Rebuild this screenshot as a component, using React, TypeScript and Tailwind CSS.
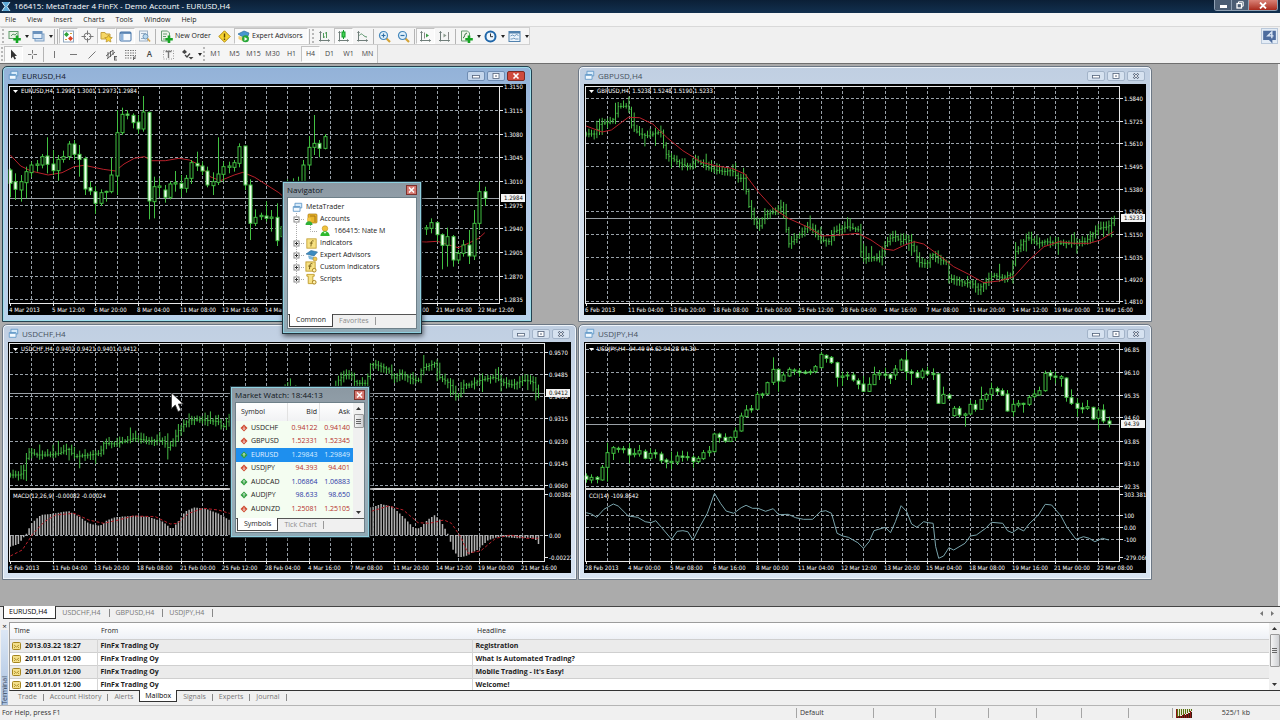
import type { ReactNode } from "react";

type Candle = [number, number, number, number, number];
type Point = [number, number];

/* ---------- chart geometry ---------- */

const GRID_STEP = 21.33;
const U = (v: number) => v / 3;

function noise(i: number, salt: number) {
  const s = Math.sin(i * 12.9898 + salt * 78.233) * 43758.5453;
  return s - Math.floor(s);
}

function linePath(points: Point[], kx: number) {
  return points.map(([x, y], i) => `${i ? "L" : "M"}${(x / kx).toFixed(1)} ${U(y).toFixed(1)}`).join("");
}

function valueAt(points: Point[], x: number) {
  for (let i = 1; i < points.length; i++) {
    const [x0, y0] = points[i - 1];
    const [x1, y1] = points[i];
    if (x <= x1) return y0 + ((y1 - y0) * (x - x0)) / (x1 - x0);
  }
  return points[points.length - 1][1];
}

function barPath(points: Point[], kx: number, x0: number) {
  let d = "";
  let prev = points[0][1];
  for (let i = 0; i < 199; i++) {
    const x = x0 + i * 2.667;
    const y = valueAt(points, x * kx);
    const up = 4 + noise(i, 1) * 16 + (noise(i, 2) > 0.9 ? 18 : 0);
    const dn = 4 + noise(i, 3) * 14 + (noise(i, 4) > 0.92 ? 18 : 0);
    const hi = Math.min(prev, y) - up;
    const lo = Math.max(prev, y) + dn;
    d += `M${x.toFixed(1)} ${U(hi).toFixed(1)}V${U(lo).toFixed(1)}M${(x - 1).toFixed(1)} ${U(prev).toFixed(1)}h1M${x.toFixed(1)} ${U(y).toFixed(1)}h1`;
    prev = y;
  }
  return d;
}

/* ---------- chart data ---------- */

const eurCandles: (Candle | null)[] = [
  [325, 330, 370, 412, 1], [340, 365, 388, 420, 1], [345, 365, 390, 425, 0], [320, 335, 368, 415, 0], [305, 315, 338, 352, 0],
  [300, 312, 316, 335, 0], [282, 290, 315, 325, 0], [232, 288, 313, 340, 1], [270, 312, 332, 345, 1], [285, 298, 332, 362, 0],
  [272, 290, 298, 308, 0], [243, 252, 290, 300, 0], [240, 252, 283, 300, 1], [255, 283, 298, 350, 1], [290, 296, 387, 405, 1],
  [365, 383, 393, 405, 1], [378, 395, 430, 462, 1], [388, 398, 430, 438, 0], [392, 394, 397, 425, 0], [293, 345, 395, 400, 0],
  [150, 218, 348, 405, 0], [143, 163, 218, 225, 0], [150, 162, 166, 178, 1], [160, 166, 188, 205, 1], [165, 186, 207, 222, 1],
  [108, 156, 207, 215, 0], [155, 157, 423, 478, 1], [350, 380, 425, 475, 0], [355, 378, 382, 410, 0], [375, 390, 412, 428, 1],
  [365, 372, 412, 418, 0], [333, 368, 372, 395, 0], [345, 370, 385, 410, 1], [345, 355, 385, 398, 0], [300, 308, 355, 372, 0],
  [275, 310, 318, 333, 1], [305, 318, 333, 345, 1], [320, 333, 375, 382, 1], [337, 365, 377, 405, 0], [232, 342, 367, 375, 0],
  [305, 320, 343, 365, 0], [305, 318, 322, 340, 0], [300, 308, 322, 335, 0], [250, 260, 310, 322, 0], [258, 258, 375, 390, 1],
  [358, 375, 490, 540, 1], [448, 472, 490, 498, 0], [458, 466, 470, 480, 0], [424, 468, 475, 485, 1], [450, 471, 475, 515, 0],
  [430, 472, 542, 558, 1], [480, 500, 530, 560, 0], [358, 400, 450, 480, 0], [355, 390, 420, 440, 0], [350, 365, 400, 420, 0],
  [300, 315, 370, 380, 0], [228, 262, 315, 330, 0], [165, 250, 262, 285, 0], [240, 250, 265, 292, 1], [222, 230, 265, 268, 0],
  null, null, null, null, null, null, null, null, null, null, null, null, null, null, null, null, null, null,
  [495, 503, 507, 525, 0], [475, 488, 505, 520, 0], [485, 488, 524, 545, 1], [520, 524, 556, 628, 1], [503, 530, 556, 620, 0],
  [525, 530, 600, 620, 1], [570, 580, 600, 610, 0], [540, 555, 580, 590, 0], [510, 555, 588, 612, 1], [450, 490, 588, 600, 0],
  [365, 395, 490, 510, 0], [380, 395, 415, 438, 1],
];

const eurAverage: Point[] = [
  [30, 285], [60, 318], [90, 333], [140, 345], [180, 338], [215, 320], [245, 316], [300, 328], [335, 333], [360, 312], [390, 295],
  [420, 290], [440, 302], [480, 302], [520, 295], [550, 300], [580, 315], [610, 350], [640, 362], [680, 345], [705, 337], [740, 352],
  [770, 372], [810, 398], [900, 480], [1100, 540], [1238, 546], [1270, 544], [1330, 563], [1360, 550], [1390, 535], [1408, 518],
];

const gbpPrice: Point[] = [
  [43, 222], [65, 222], [80, 190], [100, 188], [118, 175], [125, 140], [155, 138], [165, 205], [185, 222], [205, 228], [225, 220],
  [243, 215], [252, 280], [270, 295], [300, 315], [320, 320], [335, 300], [360, 320], [385, 330], [410, 335], [430, 330], [445, 355],
  [465, 355], [471, 425], [485, 470], [503, 500], [515, 465], [545, 455], [560, 440], [572, 470], [578, 555], [600, 535], [630, 500],
  [650, 510], [665, 540], [690, 545], [700, 515], [735, 500], [768, 510], [775, 598], [800, 592], [820, 598], [835, 560], [850, 535],
  [865, 530], [880, 545], [895, 530], [910, 560], [930, 610], [950, 610], [960, 580], [985, 600], [1000, 605], [1003, 655], [1030, 660],
  [1050, 670], [1065, 665], [1085, 690], [1100, 670], [1125, 645], [1150, 655], [1175, 640], [1180, 580], [1195, 560], [1215, 530],
  [1240, 550], [1265, 545], [1290, 550], [1320, 550], [1345, 550], [1352, 545], [1370, 545], [1390, 520], [1405, 505], [1430, 500], [1447, 480],
];

const gbpAverage: Point[] = [
  [43, 198], [85, 216], [110, 210], [155, 172], [185, 173], [220, 192], [260, 235], [300, 272], [350, 307], [390, 318], [430, 325],
  [465, 342], [500, 395], [540, 445], [580, 475], [630, 500], [670, 528], [720, 525], [765, 520], [800, 540], [835, 567], [860, 571],
  [890, 555], [915, 545], [940, 552], [980, 585], [1020, 620], [1060, 643], [1100, 668], [1140, 663], [1180, 650], [1220, 600],
  [1260, 560], [1300, 545], [1340, 550], [1380, 550], [1410, 540], [1445, 515],
];

const chfPrice: Point[] = [
  [28, 465], [55, 465], [65, 450], [75, 395], [100, 405], [130, 405], [160, 400], [185, 385], [200, 410], [240, 405], [270, 400],
  [280, 370], [310, 372], [360, 355], [400, 362], [440, 362], [455, 385], [470, 360], [485, 325], [510, 300], [550, 300], [590, 305],
  [602, 325], [620, 290], [700, 260], [775, 208], [800, 240], [900, 225], [915, 180], [930, 165], [950, 163], [960, 190], [990, 190],
  [1002, 130], [1030, 140], [1050, 150], [1065, 175], [1080, 160], [1110, 175], [1130, 185], [1140, 145], [1175, 130], [1185, 170],
  [1215, 190], [1230, 230], [1240, 225], [1250, 195], [1270, 195], [1300, 180], [1335, 172], [1365, 190], [1385, 195], [1415, 180],
  [1440, 185], [1455, 225],
];

const macdBars: Point[] = [
  [28, 680], [50, 672], [62, 655], [72, 640], [85, 610], [110, 585], [150, 580], [185, 573], [215, 590], [240, 610], [270, 618],
  [290, 600], [310, 592], [360, 587], [400, 590], [440, 605], [465, 628], [485, 600], [500, 575], [525, 562], [560, 568], [590, 580],
  [620, 600], [700, 620], [900, 600], [960, 570], [1010, 560], [1030, 552], [1060, 560], [1090, 590], [1120, 625], [1135, 625],
  [1155, 600], [1175, 585], [1190, 600], [1210, 640], [1225, 690], [1240, 712], [1260, 708], [1290, 690], [1320, 660], [1350, 650],
  [1400, 655], [1430, 653], [1447, 658], [1455, 672],
];

const macdSignal: Point[] = [
  [28, 708], [60, 690], [90, 640], [120, 605], [150, 585], [200, 580], [240, 600], [280, 610], [320, 600], [360, 588], [420, 590],
  [460, 612], [480, 610], [510, 580], [550, 565], [590, 570], [620, 580], [800, 610], [1000, 575], [1050, 558], [1090, 570], [1130, 608],
  [1160, 610], [1200, 600], [1220, 610], [1245, 650], [1265, 700], [1300, 692], [1340, 655], [1380, 645], [1420, 655], [1455, 655],
];

const jpyCandles: Candle[] = [
  [460, 468, 478, 488, 1], [463, 472, 480, 490, 0], [468, 472, 478, 490, 1], [435, 442, 480, 482, 0], [368, 398, 442, 485, 0],
  [378, 383, 400, 420, 0], [380, 385, 388, 398, 1], [378, 386, 389, 400, 1], [370, 386, 405, 430, 1], [385, 400, 404, 412, 0],
  [375, 392, 402, 410, 0], [388, 394, 415, 418, 1], [385, 400, 415, 420, 0], [388, 398, 402, 415, 1], [395, 402, 422, 430, 1],
  [415, 420, 426, 445, 1], [395, 424, 428, 448, 0], [395, 408, 426, 435, 0], [392, 408, 412, 425, 1], [395, 410, 413, 422, 1],
  [405, 412, 425, 443, 1], [408, 415, 425, 430, 0], [390, 398, 416, 420, 0], [378, 393, 398, 410, 0], [338, 342, 395, 398, 0],
  [338, 342, 353, 368, 1], [340, 352, 363, 368, 1], [350, 352, 364, 366, 0], [322, 333, 352, 362, 0], [278, 288, 333, 335, 0],
  [255, 270, 290, 290, 0], [255, 266, 270, 278, 1], [215, 223, 268, 270, 0], [218, 222, 225, 235, 0], [185, 188, 222, 225, 0],
  [112, 148, 187, 195, 0], [145, 148, 183, 215, 1], [155, 165, 183, 185, 0], [142, 148, 168, 170, 0], [145, 150, 153, 165, 1],
  [145, 153, 158, 170, 1], [150, 156, 160, 163, 1], [148, 155, 158, 165, 0], [135, 140, 155, 160, 0], [95, 103, 143, 145, 0],
  [103, 106, 115, 128, 1], [108, 112, 128, 132, 1], [125, 128, 172, 200, 1], [155, 168, 172, 198, 0], [155, 165, 168, 180, 0],
  [158, 165, 180, 185, 1], [175, 182, 193, 208, 1], [168, 192, 214, 216, 1], [172, 193, 214, 216, 0], [140, 163, 194, 195, 0],
  [150, 160, 165, 180, 0], [143, 162, 166, 175, 1], [160, 163, 175, 192, 1], [135, 147, 165, 180, 0], [115, 120, 150, 152, 0],
  [93, 120, 155, 180, 1], [148, 155, 160, 195, 1], [150, 158, 172, 175, 1], [145, 153, 172, 178, 0], [140, 153, 162, 168, 1],
  [145, 160, 164, 180, 1], [160, 162, 250, 252, 1], [200, 223, 250, 252, 0], [220, 225, 235, 240, 1], [258, 265, 287, 290, 0],
  [258, 265, 285, 292, 1], [278, 282, 286, 320, 0], [240, 253, 282, 285, 0], [240, 253, 268, 275, 1], [200, 238, 268, 270, 0],
  [218, 223, 238, 245, 0], [188, 206, 223, 240, 0], [200, 206, 215, 225, 1], [205, 212, 225, 228, 1], [210, 222, 273, 275, 1],
  [240, 253, 275, 290, 0], [240, 250, 255, 262, 0], [248, 250, 253, 278, 1], [225, 232, 253, 258, 0], [210, 222, 230, 235, 0],
  [200, 212, 225, 227, 0], [152, 160, 212, 215, 0], [150, 158, 168, 180, 1], [155, 168, 172, 190, 1], [165, 170, 175, 200, 0],
  [172, 174, 232, 245, 1], [208, 233, 250, 255, 1], [235, 250, 265, 290, 1], [248, 263, 267, 280, 1], [240, 260, 265, 270, 0],
  [260, 262, 297, 300, 1], [262, 270, 295, 328, 0], [253, 270, 303, 310, 1], [290, 303, 312, 322, 1],
];

const cci: Point[] = [
  [43, 578], [57, 582], [71, 592], [90, 568], [115, 552], [128, 558], [155, 588], [180, 592], [200, 605], [215, 608], [228, 602],
  [245, 625], [270, 658], [285, 634], [300, 632], [313, 635], [327, 660], [345, 620], [365, 580], [384, 520], [400, 550], [415, 573],
  [435, 580], [455, 563], [468, 556], [485, 565], [500, 565], [520, 574], [540, 566], [555, 584], [580, 583], [600, 593], [620, 598],
  [645, 598], [665, 575], [680, 572], [695, 580], [710, 640], [725, 648], [740, 652], [765, 668], [780, 685], [795, 665], [808, 632],
  [820, 628], [838, 622], [852, 638], [865, 605], [880, 557], [895, 575], [908, 612], [922, 622], [940, 605], [952, 608], [965, 610],
  [972, 680], [980, 715], [993, 708], [1007, 683], [1020, 690], [1050, 670], [1064, 648], [1080, 645], [1105, 625], [1120, 607],
  [1150, 610], [1163, 632], [1175, 638], [1192, 625], [1206, 633], [1220, 612], [1245, 585], [1263, 553], [1280, 555], [1305, 588],
  [1320, 620], [1345, 658], [1365, 650], [1380, 655], [1395, 665], [1415, 655], [1432, 660],
];

const febDates = ["6 Feb 2013", "11 Feb 04:00", "13 Feb 20:00", "18 Feb 08:00", "21 Feb 00:00", "25 Feb 12:00", "28 Feb 04:00", "4 Mar 16:00", "7 Mar 08:00", "11 Mar 20:00", "14 Mar 12:00", "19 Mar 00:00", "21 Mar 16:00"];

/* ---------- chart parts ---------- */

function Candles({ data, x0 }: { data: (Candle | null)[]; x0: number }) {
  return (
    <g stroke="#41c041" strokeWidth="1">
      {data.map((c, i) => {
        if (!c) return null;
        const x = Math.round(x0 + i * 5.333) + 0.5;
        const h = Math.max(1, U(c[2] - c[1]));
        return (
          <g key={i}>
            <path d={`M${x} ${U(c[0])}V${U(c[3])}`} />
            <rect x={x - 1.5} y={U(c[1])} width="3" height={h} fill={c[4] ? "#f0fff0" : "#000"} />
          </g>
        );
      })}
    </g>
  );
}

type ChartProps = {
  label: string;
  x: number;
  y: number;
  width: number;
  left: number;
  right: number;
  top: number;
  bottom: number;
  split?: number;
  rows: [number, string][];
  extra?: [number, string][];
  extraLines?: number[];
  quote: string;
  indicator?: string;
  priceY: number;
  price: string;
  dates: string[];
  children: ReactNode;
};

function Chart(p: ChartProps) {
  const columns: number[] = [];
  for (let x = p.left + GRID_STEP; x < p.right - 2; x += GRID_STEP) columns.push(Math.round(x) + 0.5);
  const lineYs = [...p.rows.map((r) => U(r[0])), ...(p.extraLines ?? []).map(U)];
  return (
    <svg
      role="img"
      aria-label={p.label}
      className="block bg-black font-['DejaVu_Sans_Condensed','Liberation_Sans',sans-serif] text-[6px]"
      width={p.width}
      height={231}
      viewBox={`${p.x} ${p.y} ${p.width} 231`}
    >
      <g stroke="#98a0a8" strokeDasharray="3 2" strokeWidth="1">
        {columns.map((x) => (
          <path key={x} d={`M${x} ${p.top}V${p.bottom}`} />
        ))}
        {lineYs.map((y) => (
          <path key={y} d={`M${p.left} ${Math.round(y) + 0.5}H${p.right}`} />
        ))}
      </g>
      <path d={`M${p.left} ${Math.round(p.priceY) + 0.5}H${p.right}`} stroke="#9aa0a6" />
      {p.children}
      <rect x={p.left - 0.5} y={p.top + 0.5} width={p.right - p.left} height={p.bottom - p.top} fill="none" stroke="#e8e8e8" />
      {p.split && <path d={`M${p.left - 1} ${p.split}H${p.right}`} stroke="#d8d8d8" strokeWidth="2" />}
      <path d={`M${p.left + 3} ${p.y + 6}h5l-2.5 3z`} fill="#fff" />
      <g fill="#fff">
        <text x={p.left + 11} y={p.y + 9} xmlSpace="preserve">{p.quote}</text>
        {p.indicator && p.split && <text x={p.left + 3} y={p.split + 9}>{p.indicator}</text>}
        {[...p.rows, ...(p.extra ?? [])].map(([y, t]) => (
          <g key={t}>
            <path d={`M${p.right} ${Math.round(U(y)) + 0.5}h3`} stroke="#e8e8e8" />
            <text x={p.right + 4} y={Math.round(U(y)) + 3}>{t}</text>
          </g>
        ))}
        {p.dates.map((t, i) => {
          const x = Math.round(p.left + i * GRID_STEP * 2);
          return (
            <g key={t}>
              <path d={`M${x + 0.5} ${p.bottom}v3`} stroke="#e8e8e8" />
              <text x={x - 1} y={p.bottom + 9}>{t}</text>
            </g>
          );
        })}
      </g>
      <rect x={p.right + 1} y={p.priceY - 4} width="24" height="8" fill="#f4f4f4" />
      <text x={p.right + 4} y={Math.round(p.priceY) + 2} fill="#111">{p.price}</text>
    </svg>
  );
}

/* ---------- icons ---------- */

function Svg({ children, size = 13 }: { children: ReactNode; size?: number }) {
  return (
    <svg width={size} height={size} viewBox="0 0 13 13" fill="none" className="shrink-0" aria-hidden="true">
      {children}
    </svg>
  );
}

const plus = <path d="M9 5.500v7.500M5.300 9.200h7.500" stroke="#15a522" strokeWidth="2.600" />;
const axes = <path d="M2.500 1.500v10M1 10.500h10.500M1.500 3l1-1.500 1 1.500M10 9.500l1.500 1-1.500 1" stroke="#6f7d79" />;

const icons = {
  newChart: <Svg><rect x="1" y="1.500" width="9" height="7" fill="#e8f2e4" stroke="#5f9a6a" /><path d="M3 6l2-2 2 1 2-2" stroke="#5f9a6a" />{plus}</Svg>,
  profiles: <Svg><rect x="3" y="4" width="9" height="7" fill="#cfdff0" stroke="#7fa0c4" /><rect x="1" y="1.500" width="9" height="7" fill="#e6f0fa" stroke="#6b92bd" /><path d="M1 3h9" stroke="#6b92bd" strokeWidth="2" /></Svg>,
  market: <Svg><rect x="1.500" y="1" width="10" height="11" fill="#fff" stroke="#8fa8c0" /><path d="M4.500 2L7 4.500 4.500 7 2 4.500z" fill="#2ba33a" /><path d="M8.500 6l2.500 2.500L8.500 11 6 8.500z" fill="#dc4326" /><path d="M3 9.500h2M8 3.500h2" stroke="#d0a040" /></Svg>,
  crosshair: <Svg><circle cx="6.500" cy="6.500" r="3.500" stroke="#777" /><path d="M6.500.5v4.500M6.500 8v4.500M.5 6.500H5M8 6.500h4.500" stroke="#777" /></Svg>,
  folder: <Svg><path d="M1 2.500h4l1 1.500h4v5H1z" fill="#f6d766" stroke="#c5a03d" /><path d="M8.500 5l1.200 2.300 2.600.3-1.900 1.800.5 2.600-2.400-1.200L6.100 12l.5-2.600-1.900-1.800 2.600-.3z" fill="#f8d23a" stroke="#b58d2a" strokeWidth=".7" /></Svg>,
  terminal: <Svg><rect x="1" y="2" width="11" height="9" rx="1" fill="#f5f9fd" stroke="#4273a9" /><path d="M1 3h11" stroke="#4273a9" strokeWidth="1.500" /><path d="M2 4h2.500v6.500H2z" fill="#8fb4dc" /></Svg>,
  tester: <Svg><rect x="1.500" y="1" width="8" height="10" fill="#eef4fa" stroke="#9db0c4" /><path d="M3 3.500h5M3 8.500h3" stroke="#9db0c4" /><circle cx="7.500" cy="6.500" r="2.500" fill="#b9d8ee" stroke="#7096ba" /><path d="M9.500 8.500l2.500 3" stroke="#d3a24d" strokeWidth="1.600" /></Svg>,
  order: <Svg><path d="M1.500 1h6l2 2v8h-8z" fill="#eef5ea" stroke="#679a71" /><path d="M3 4h4M3 6.500h3M3 9h2" stroke="#679a71" />{plus}</Svg>,
  warn: <Svg><path d="M6.500.8l5.700 5.700-5.700 5.700L.8 6.500z" fill="#f7d32f" stroke="#b08a12" /><path d="M6.500 3.500v4M6.500 8.500v1.400" stroke="#5b4300" strokeWidth="1.400" /></Svg>,
  advisor: <Svg><path d="M1 4l6-3 5 2-1 3-5 1z" fill="#4796cf" stroke="#2d6d9f" strokeWidth=".7" /><path d="M1.500 6l4 1 3-1v3l-3 2-4-2z" fill="#f3cf77" /><circle cx="8.500" cy="8.800" r="3.500" fill="#27a738" /><path d="M7.500 7l3 2-3 2z" fill="#fff" /></Svg>,
  bars: <Svg>{axes}<path d="M5.500 3v5M8.500 2v6M5.500 7h1.500M7 3h1.500" stroke="#4f9a5a" /></Svg>,
  candles: <Svg>{axes}<path d="M6.500 0v9" stroke="#129c28" /><rect x="5" y="2" width="3" height="5" fill="#45cf55" stroke="#129c28" /></Svg>,
  line: <Svg>{axes}<path d="M3.500 5.500C5 3 6 4 7 5s2.500 2 4 2" stroke="#4f8d62" /></Svg>,
  zoomIn: <Svg><path d="M8 8l4 4" stroke="#d3a236" strokeWidth="2.200" /><circle cx="5.500" cy="5.500" r="4" fill="#dff0fb" stroke="#4587bb" strokeWidth="1.200" /><path d="M3.500 5.500h4M5.500 3.500v4" stroke="#2e6fa5" strokeWidth="1.200" /></Svg>,
  zoomOut: <Svg><path d="M8 8l4 4" stroke="#d3a236" strokeWidth="2.200" /><circle cx="5.500" cy="5.500" r="4" fill="#dff0fb" stroke="#4587bb" strokeWidth="1.200" /><path d="M3.500 5.500h4" stroke="#2e6fa5" strokeWidth="1.200" /></Svg>,
  scroll: <Svg>{axes}<path d="M5.500 2.500v6" stroke="#888" /><path d="M7 3.500L10 5.500 7 7.500z" fill="#3a9a45" /></Svg>,
  shift: <Svg>{axes}<path d="M10.500 2v7" stroke="#888" /><path d="M5.500 3.500l3 2-3 2z" fill="#8a9a8c" /></Svg>,
  indicator: <Svg><path d="M1.500 1h6l2 2v8h-8z" fill="#eef5ea" stroke="#679a71" /><path d="M3 8c2 0 1-5 4-5" stroke="#356c40" />{plus}</Svg>,
  clock: <Svg><circle cx="6.500" cy="6.500" r="5" fill="#eef6fd" stroke="#1f66a9" strokeWidth="2" /><path d="M6.500 3.500v3.200H9" stroke="#333" /></Svg>,
  template: <Svg><rect x="1" y="1.500" width="11" height="10" fill="#eaf3fb" stroke="#5181ad" /><path d="M1 2.500h11" stroke="#5181ad" strokeWidth="2" /><path d="M2.500 6l2-1 2 1 2-1.500 2 1M2.500 9h2l1-1 2 1h3" stroke="#5181ad" strokeWidth=".8" /></Svg>,
  pointer: <Svg><path d="M4 1.500v9l2-2 1.500 3 1.500-.7-1.400-2.800H10z" fill="#333" /></Svg>,
  cross: <Svg><path d="M6.500 2v3.500M6.500 7.500V11M2 6.500h3.500M7.500 6.500H11" stroke="#777" /></Svg>,
  vline: <Svg><path d="M6.500 3v7" stroke="#777" /></Svg>,
  hline: <Svg><path d="M3 6.500h7" stroke="#777" /></Svg>,
  trend: <Svg><path d="M2.500 10.500l7-7" stroke="#777" /></Svg>,
  channel: <Svg><path d="M1 8l7-6M2 11l8-7M3 4v6M5.500 3v6M8 2v5M9 8.500h3M9 10h2.500M9 12h3M9.500 8v4" stroke="#555" strokeWidth=".9" /></Svg>,
  fibo: <Svg><path d="M1 2.500h11M1 5h11M1 7.500h11M1 10h7" stroke="#777" strokeDasharray="1.500 1" /><path d="M9.500 12V9h2.500M9.500 10.500h2" stroke="#666" /></Svg>,
  label: <Svg><path d="M1.500 2.500h10v8.500h-10z" stroke="#999" strokeDasharray="1 1.500" /><path d="M3.500 3.500h6M6.500 3.500v6.500" stroke="#777" strokeWidth="1.400" /></Svg>,
  arrows: <Svg><path d="M1 4l2.500-2.500L6 4 3.500 6z" fill="#444" /><path d="M4 7l2 2 3-3.500" stroke="#444" strokeWidth="1.300" /><path d="M7.500 9h5L10 11.500z" fill="#444" /></Svg>,
  chat: <Svg size={15}><path d="M1 1.500h11v8H9v3l-3-3H1z" fill="#4d6c9e" /><path d="M8.500 8V2.500L5 6h5" stroke="#d9e5f5" strokeWidth="1.200" /></Svg>,
  doc: <Svg size={11}><path d="M3.500 1.500h8v5.500h-8z" fill="#d8ebfa" stroke="#5c95c6" /><path d="M1.500 5.500h8v5.500h-8z" fill="#f2f9ff" stroke="#5c95c6" /><path d="M2 6h7" stroke="#5c95c6" strokeWidth="1.500" /></Svg>,
  accounts: <Svg><rect x="3" y="1" width="9" height="9" rx="1" fill="#e8b52c" stroke="#a87713" strokeWidth=".7" /><path d="M5 3h5v6" stroke="#a87713" /><circle cx="4" cy="6.500" r="2" fill="#f1c649" /><path d="M.5 12c0-5 7-5 7 0z" fill="#2fb039" /></Svg>,
  user: <Svg size={12}><circle cx="6.500" cy="3.800" r="3" fill="#f0c23c" stroke="#b98a1a" strokeWidth=".6" /><path d="M1.500 12c0-7 10-7 10 0z" fill="#2fb92f" /><path d="M5 7.500l1.500 2 1.500-2z" fill="#e9ffe6" /></Svg>,
  fn: <Svg size={11}><rect x="1" y="1" width="11" height="11" fill="#f7e184" stroke="#c09d2e" /><path d="M9 3.500c-2-.8-2.500.5-2.700 2L5.800 10M4.500 6h3.500" stroke="#6b5411" /></Svg>,
  hat: <Svg><path d="M1 5l5-3.500L12.500 3 9 7z" fill="#3d8bc0" stroke="#2b6994" strokeWidth=".6" /><path d="M3 6.500l6 1.500v3l-5-1z" fill="#7fb7da" /><circle cx="10" cy="10" r="2" fill="#f0c94e" stroke="#b3892a" strokeWidth=".6" /></Svg>,
  fnGear: <Svg size={12}><rect x="1" y="1" width="10" height="10" fill="#f7e184" stroke="#c09d2e" /><path d="M8 3c-2-.8-2.500.5-2.700 2L4.800 9M3.500 5.500H7" stroke="#6b5411" /><circle cx="10" cy="10" r="2" fill="#fff3b0" stroke="#a8801d" /></Svg>,
  script: <Svg size={12}><path d="M2 1.500h8v2H8.500v6H11v2H3.500v-8H2z" fill="#f7e184" stroke="#c09d2e" /><circle cx="10" cy="10" r="2" fill="#fff3b0" stroke="#a8801d" /></Svg>,
};

function Logo() {
  return (
    <svg width="10" height="11" viewBox="0 0 10 11" aria-hidden="true">
      <path d="M1 1h8L6 5.500 9 10H1l3-4.500z" fill="#5ca9d6" />
      <path d="M1 1l3 4.500L1 10M9 1L6 5.500 9 10" stroke="#d2ecfa" fill="none" />
    </svg>
  );
}

/* ---------- toolbar parts ---------- */

function Tool({ name, on, children }: { name: string; on?: boolean; children: ReactNode }) {
  return (
    <button
      type="button"
      aria-label={name}
      aria-pressed={on}
      className={
        on
          ? "flex h-[16px] w-[19px] shrink-0 items-center justify-center border border-[#c3c3c3] border-r-white border-b-white bg-[#fafafa]"
          : "flex h-[16px] w-[19px] shrink-0 items-center justify-center"
      }
    >
      {children}
    </button>
  );
}

function Drop({ name }: { name: string }) {
  return (
    <button type="button" aria-label={name} className="flex h-[16px] w-[5px] items-center justify-center">
      <svg width="4" height="3" viewBox="0 0 4 3" aria-hidden="true"><path d="M0 0h4L2 3z" fill="#222" /></svg>
    </button>
  );
}

const Sep = () => <span className="mx-px h-[15px] w-px shrink-0 bg-[#b4b4b4]" />;
const Grip = () => <span className="mx-px h-[14px] w-[2px] shrink-0 border-l-2 border-dotted border-[#b8b8b8]" />;

function Toolbars() {
  return (
    <div className="flex items-start justify-between border-b border-[#6f6f6f] bg-[#f0f0f0] pr-[2px]">
      <div className="flex flex-col items-start">
        <div role="toolbar" aria-label="Standard" className="flex h-[18px] items-center border border-[#d0d0d0] border-l-transparent bg-[#f5f5f5]">
          <Grip />
          <Tool name="New chart">{icons.newChart}</Tool>
          <Drop name="New chart options" />
          <Tool name="Profiles">{icons.profiles}</Tool>
          <Drop name="Profile options" />
          <Sep /><Sep />
          <Tool name="Market watch" on>{icons.market}</Tool>
          <Tool name="Data window">{icons.crosshair}</Tool>
          <Tool name="Navigator" on>{icons.folder}</Tool>
          <Tool name="Terminal" on>{icons.terminal}</Tool>
          <Tool name="Strategy tester">{icons.tester}</Tool>
          <Sep />
          <button type="button" className="flex h-[16px] w-[58px] items-center gap-[2px] pl-[3px] whitespace-nowrap">{icons.order}New Order</button>
          <Tool name="Meta editor">{icons.warn}</Tool>
          <button type="button" aria-pressed className="flex h-[16px] w-[74px] items-center gap-[2px] border border-[#c3c3c3] border-r-white border-b-white bg-[#fafafa] pl-[2px] whitespace-nowrap">{icons.advisor}Expert Advisors</button>
          <Sep />
          <Grip />
          <Tool name="Bar chart">{icons.bars}</Tool>
          <Tool name="Candlesticks" on>{icons.candles}</Tool>
          <Tool name="Line chart">{icons.line}</Tool>
          <Sep />
          <Tool name="Zoom in">{icons.zoomIn}</Tool>
          <Tool name="Zoom out">{icons.zoomOut}</Tool>
          <Sep />
          <Tool name="Auto scroll" on>{icons.scroll}</Tool>
          <Tool name="Chart shift">{icons.shift}</Tool>
          <Sep />
          <Tool name="Indicators">{icons.indicator}</Tool>
          <Drop name="Indicator options" />
          <Tool name="Periods">{icons.clock}</Tool>
          <Drop name="Period options" />
          <Tool name="Templates">{icons.template}</Tool>
          <Drop name="Template options" />
        </div>
        <div className="flex h-[18px] items-center border-r border-[#c4c4c4] bg-[#f5f5f5] text-[7px] text-[#444]">
          <Grip />
          <Tool name="Cursor" on>{icons.pointer}</Tool>
          <Tool name="Crosshair">{icons.cross}</Tool>
          <Sep />
          <Tool name="Vertical line">{icons.vline}</Tool>
          <Tool name="Horizontal line">{icons.hline}</Tool>
          <Tool name="Trendline">{icons.trend}</Tool>
          <Tool name="Channel">{icons.channel}</Tool>
          <Tool name="Fibonacci">{icons.fibo}</Tool>
          <Tool name="Text"><span className="text-[8px] font-semibold">A</span></Tool>
          <Tool name="Text label">{icons.label}</Tool>
          <Tool name="Arrows">{icons.arrows}</Tool>
          <Drop name="Arrow options" />
          <Grip />
          {["M1", "M5", "M15", "M30", "H1", "H4", "D1", "W1", "MN"].map((t) => (
            <Tool key={t} name={t} on={t === "H4"}>{t}</Tool>
          ))}
        </div>
      </div>
      <button type="button" aria-label="Messages" className="mt-px flex h-[16px] w-[17px] items-center justify-center border border-[#b9c8da] bg-[#e3ecf6]">{icons.chat}</button>
    </div>
  );
}

/* ---------- windows ---------- */

function WinButtons({ active }: { active?: boolean }) {
  const base = "flex h-[10px] w-[18px] items-center justify-center rounded-[2px] border";
  const plain = active ? "border-[#6f8db3] bg-[#c4d6ec]" : "border-[#a3b4c9] bg-[#d6e2f0]";
  const close = active ? "border-[#7d2a24] bg-[#cf4a3d]" : "border-[#a3b4c9] bg-[#d6e2f0]";
  const ink = "#54637a";
  return (
    <div className="flex gap-[2px]">
      <button type="button" aria-label="Minimize" className={`${base} ${plain}`}>
        <svg width="8" height="6" viewBox="0 0 8 6" aria-hidden="true"><rect x=".5" y="2.500" width="7" height="2.500" fill="#fff" stroke={ink} strokeWidth=".8" /></svg>
      </button>
      <button type="button" aria-label="Maximize" className={`${base} ${plain}`}>
        <svg width="8" height="6" viewBox="0 0 8 6" aria-hidden="true"><rect x="1" y=".5" width="6" height="5" fill="#fff" stroke={ink} strokeWidth=".8" /><path d="M3 3h2" stroke={ink} /></svg>
      </button>
      <button type="button" aria-label="Close" className={`${base} ${close}`}>
        <svg width="8" height="6" viewBox="0 0 8 6" aria-hidden="true"><path d="M1.500.5l5 5M6.500.5l-5 5" stroke={active ? "#fff" : ink} strokeWidth={active ? 1.6 : 2} />{!active && <path d="M1.500.5l5 5M6.500.5l-5 5" stroke="#fff" strokeWidth=".8" />}</svg>
      </button>
    </div>
  );
}

function ChartWindow({ title, active, place, children }: { title: string; active?: boolean; place: string; children: ReactNode }) {
  return (
    <section
      className={`absolute rounded-t-[5px] border px-[5px] pb-[6px] ${place} ${
        active
          ? "border-[#23414f] bg-linear-to-b from-[#93b2d8] via-[#b4cbe8] to-[#b9d1ea] shadow-[inset_0_0_0_1px_#9fdcea]"
          : "border-[#6d7885] bg-linear-to-b from-[#c0cfe2] via-[#d3dfed] to-[#d6e2f0] shadow-[inset_0_0_0_1px_#f0f5fa]"
      }`}
    >
      <header className="flex h-[17px] items-center justify-between pr-px">
        <h2 className={`flex items-center gap-[3px] text-[8px] ${active ? "text-[#16202c]" : "text-[#46505e]"}`}>
          {icons.doc}{title}
        </h2>
        <WinButtons active={active} />
      </header>
      {children}
    </section>
  );
}

function ToolWindow({ title, place, tabs, children }: { title: string; place: string; tabs: string[]; children: ReactNode }) {
  return (
    <section className={`absolute flex flex-col border border-[#23343d] bg-linear-to-b from-[#8b98a2] via-[#a3b1bb] to-[#8fa9b5] p-[4px] pt-0 shadow-[inset_0_0_0_1px_#8fd0df,1px_2px_5px_rgba(0,0,0,.6)] ${place}`}>
      <header className="flex h-[15px] shrink-0 items-center justify-between text-[8px] text-[#10161c]">
        <h2>{title}</h2>
        <button type="button" aria-label={`Close ${title}`} className="flex h-[10px] w-[11px] items-center justify-center border border-[#7e312c] bg-[#d5776f]">
          <svg width="7" height="6" viewBox="0 0 7 6" aria-hidden="true"><path d="M1 .5l5 5M6 .5l-5 5" stroke="#fff" strokeWidth="1.500" /></svg>
        </button>
      </header>
      <div className="flex min-h-0 flex-1 flex-col border border-[#6e8089] bg-[#f0f0f0]">
        <div className="min-h-0 flex-1 overflow-hidden bg-white">{children}</div>
        <div role="tablist" className="flex h-[14px] shrink-0 items-start border-t border-[#555] pl-px text-[7px]">
          <button type="button" role="tab" aria-selected className="-mt-px h-[13px] border border-t-0 border-[#444] bg-white px-[6px]">{tabs[0]}</button>
          <button type="button" role="tab" aria-selected={false} className="h-[12px] px-[6px] text-[#8b8b8b]">{tabs[1]}</button>
          <span className="mt-[2px] h-[8px] w-px bg-[#999]" />
        </div>
      </div>
    </section>
  );
}

const tree: { depth: number; mark: string; icon: ReactNode; text: string }[] = [
  { depth: 0, mark: "", icon: icons.doc, text: "MetaTrader" },
  { depth: 1, mark: "-", icon: icons.accounts, text: "Accounts" },
  { depth: 2, mark: "", icon: icons.user, text: "166415: Nate M" },
  { depth: 1, mark: "+", icon: icons.fn, text: "Indicators" },
  { depth: 1, mark: "+", icon: icons.hat, text: "Expert Advisors" },
  { depth: 1, mark: "+", icon: icons.fnGear, text: "Custom Indicators" },
  { depth: 1, mark: "+", icon: icons.script, text: "Scripts" },
];

function Expander({ open }: { open: boolean }) {
  return (
    <svg width="14" height="12" viewBox="0 0 14 12" fill="none" aria-hidden="true">
      <path d="M5.500 0v12M8 6.500h6" stroke="#aaa" strokeDasharray="1 1" />
      <rect x="3" y="4" width="5" height="5" fill="#fff" stroke="#8a8a8a" />
      <path d={open ? "M4 6.500h3" : "M4 6.500h3M5.500 5v3"} stroke="#333" />
    </svg>
  );
}

function Navigator() {
  return (
    <ToolWindow title="Navigator" place="top-[117px] left-[282px] h-[153px] w-[140px]" tabs={["Common", "Favorites"]}>
      <ul className="pt-[3px] pl-[3px] text-[7px] leading-[12px] text-[#1a1a1a]">
        {tree.map((n) => (
          <li key={n.text} className="flex h-[12px] items-center gap-[3px]">
            <span className="flex items-center">
              {n.depth === 1 && <Expander open={n.mark === "-"} />}
              {n.depth === 2 && (
                <svg width="28" height="12" viewBox="0 0 28 12" fill="none" aria-hidden="true"><path d="M5.500 0v12M19.500 0v6.500H27" stroke="#aaa" strokeDasharray="1 1" /></svg>
              )}
              <span className="flex w-[12px] justify-center">{n.icon}</span>
            </span>
            {n.text}
          </li>
        ))}
      </ul>
    </ToolWindow>
  );
}

const quotes: [string, string, string, string][] = [
  ["USDCHF", "0.94122", "0.94140", "down"],
  ["GBPUSD", "1.52331", "1.52345", "down"],
  ["EURUSD", "1.29843", "1.29849", "selected"],
  ["USDJPY", "94.393", "94.401", "down"],
  ["AUDCAD", "1.06864", "1.06883", "up"],
  ["AUDJPY", "98.633", "98.650", "up"],
  ["AUDNZD", "1.25081", "1.25105", "down"],
  ["AUDUSD", "1.04456", "1.04500", "up"],
];

function MarketWatch() {
  return (
    <ToolWindow title="Market Watch: 18:44:13" place="top-[322px] left-[230px] h-[152px] w-[140px]" tabs={["Symbols", "Tick Chart"]}>
      <div className="flex h-full items-start">
        <table className="h-[126px] flex-1 border-collapse text-[7px] leading-[10px]">
          <thead>
            <tr className="h-[18px] bg-linear-to-b from-white to-[#f1f2f4] text-[#222]">
              <th scope="col" className="border-r border-[#e2e2e2] pl-[5px] text-left font-normal">Symbol</th>
              <th scope="col" className="border-r border-[#e2e2e2] pr-[2px] text-right font-normal">Bid</th>
              <th scope="col" className="pr-[3px] text-right font-normal">Ask</th>
            </tr>
          </thead>
          <tbody>
            {quotes.map(([s, bid, ask, kind]) => {
              const sel = kind === "selected";
              const tone = sel ? "text-[#d8ecff]" : kind === "up" ? "text-[#2a35a5]" : "text-[#b5302c]";
              return (
                <tr key={s} className={sel ? "bg-[#1e8fee] text-[#e3f2ff]" : "bg-[#f4fdf1] text-[#222]"}>
                  <td className="p-0 pl-[4px]">
                    <span className="flex items-center gap-[3px]">
                      <svg width="8" height="8" viewBox="0 0 8 8" aria-hidden="true">
                        <path d="M4 .5L7.500 4 4 7.500.5 4z" fill={kind === "down" ? "#cf4a30" : "#2f9e3d"} />
                        <path d={kind === "down" ? "M4 2.500v3M3 4.500l1 1 1-1" : "M4 2.500v3M3 3.500l1-1 1 1"} stroke="#fff" strokeWidth=".8" fill="none" />
                      </svg>
                      {s}
                    </span>
                  </td>
                  <td className={`p-0 pr-[2px] text-right ${tone}`}>{bid}</td>
                  <td className={`p-0 pr-[3px] text-right ${tone}`}>{ask}</td>
                </tr>
              );
            })}
          </tbody>
        </table>
        <ScrollBar thumb="h-[14px]" />
      </div>
    </ToolWindow>
  );
}

function ScrollBar({ thumb }: { thumb: string }) {
  return (
    <div className="flex w-[11px] shrink-0 flex-col items-center self-stretch bg-[#f0f0f0]">
      <button type="button" aria-label="Scroll up" className="flex h-[11px] w-full shrink-0 items-center justify-center">
        <svg width="5" height="3" viewBox="0 0 5 3" aria-hidden="true"><path d="M0 3h5L2.500 0z" fill="#333" /></svg>
      </button>
      <div className={`flex w-[10px] shrink-0 flex-col items-center justify-center gap-px rounded-[1px] border border-[#9a9a9a] bg-linear-to-r from-[#f4f4f4] to-[#cfd1d4] ${thumb}`}>
        <span className="h-px w-[5px] bg-[#666]" />
        <span className="h-px w-[5px] bg-[#666]" />
        <span className="h-px w-[5px] bg-[#666]" />
      </div>
      <span className="flex-1" />
      <button type="button" aria-label="Scroll down" className="flex h-[11px] w-full shrink-0 items-center justify-center">
        <svg width="5" height="3" viewBox="0 0 5 3" aria-hidden="true"><path d="M0 0h5L2.500 3z" fill="#333" /></svg>
      </button>
    </div>
  );
}

/* ---------- charts ---------- */

function EurUsd() {
  return (
    <Chart label="EURUSD four hour chart" x={8} y={24} width={518} left={10} right={500} top={26} bottom={243}
      rows={[[79, "1.3150"], [150, "1.3115"], [221, "1.3080"], [292, "1.3045"], [363, "1.3010"], [434, "1.2975"], [505, "1.2940"], [576, "1.2905"], [648, "1.2870"], [718, "1.2835"]]}
      quote="EURUSD,H4  1.2995 1.3001 1.2973 1.2984" priceY={138} price="1.2984"
      dates={["4 Mar 2013", "5 Mar 12:00", "6 Mar 20:00", "8 Mar 04:00", "11 Mar 08:00", "12 Mar 16:00", "14 Mar 00:00", "15 Mar 08:00", "18 Mar 12:00", "19 Mar 20:00", "21 Mar 04:00", "22 Mar 12:00"]}>
      <path d={linePath(eurAverage, 2.904)} fill="none" stroke="#b8202a" />
      <Candles data={eurCandles} x0={10} />
    </Chart>
  );
}

function GbpUsd() {
  return (
    <Chart label="GBPUSD four hour chart" x={14} y={24} width={562} left={16} right={550} top={26} bottom={243}
      rows={[[113, "1.5840"], [182, "1.5725"], [250, "1.5610"], [318, "1.5495"], [386, "1.5380"], [454, "1.5265"], [522, "1.5150"], [590, "1.5035"], [658, "1.4920"], [723, "1.4810"]]}
      quote="GBPUSD,H4  1.5238 1.5248 1.5190 1.5233" priceY={158} price="1.5233" dates={febDates}>
      <path d={barPath(gbpPrice, 2.658, 16.2)} stroke="#46bd46" />
      <path d={linePath(gbpAverage, 2.658)} fill="none" stroke="#b8202a" />
    </Chart>
  );
}

function UsdChf() {
  const hist: string[] = [];
  for (let i = 0; i < 199; i++) {
    const x = 10.4 + i * 2.667;
    hist.push(`M${x.toFixed(1)} 215V${U(valueAt(macdBars, x * 2.703)).toFixed(1)}`);
  }
  return (
    <Chart label="USDCHF four hour chart with MACD" x={8} y={22} width={563} left={10} right={545} top={23} bottom={241} split={169}
      rows={[[95, "0.9570"], [161, "0.9485"], [228, "0.9400"], [295, "0.9315"], [362, "0.9230"], [428, "0.9145"], [495, "0.9060"]]}
      extra={[[523, "0.00382"], [645, "0.00"], [711, "-0.00222"]]} extraLines={[645]}
      quote="USDCHF,H4  0.9402 0.9421 0.9401 0.9412" indicator="MACD(12,26,9) -0.00082 -0.00024" priceY={73} price="0.9412" dates={febDates}>
      <path d={barPath(chfPrice, 2.703, 10.4)} stroke="#46bd46" />
      <path d={hist.join("")} stroke="#b4b4b4" strokeWidth="1.500" />
      <path d={linePath(macdSignal, 2.703)} fill="none" stroke="#b8202a" strokeDasharray="3 2" />
    </Chart>
  );
}

function UsdJpy() {
  return (
    <Chart label="USDJPY four hour chart with CCI" x={14} y={22} width={562} left={16} right={550} top={23} bottom={241} split={169}
      rows={[[86, "96.85"], [156, "96.10"], [225, "95.35"], [292, "94.60"], [362, "93.85"], [430, "93.10"], [498, "92.35"]]}
      extra={[[523, "303.3816"], [586, "100"], [622, "0.00"], [658, "-100"], [711, "-279.066"]]} extraLines={[586, 622, 658]}
      quote="USDJPY,H4  94.49 94.62 94.28 94.39" indicator="CCI(14) -109.8642" priceY={104} price="94.39"
      dates={["28 Feb 2013", "4 Mar 00:00", "5 Mar 08:00", "6 Mar 16:00", "8 Mar 00:00", "11 Mar 04:00", "12 Mar 12:00", "13 Mar 20:00", "15 Mar 04:00", "18 Mar 08:00", "19 Mar 16:00", "21 Mar 00:00", "22 Mar 08:00"]}>
      <Candles data={jpyCandles} x0={16} />
      <path d={linePath(cci, 2.658)} fill="none" stroke="#7aa5ad" />
    </Chart>
  );
}

/* ---------- terminal ---------- */

const mails: [string, string][] = [
  ["2013.03.22 18:27", "Registration"],
  ["2011.01.01 12:00", "What Is Automated Trading?"],
  ["2011.01.01 12:00", "Mobile Trading - It's Easy!"],
  ["2011.01.01 12:00", "Welcome!"],
];

function Terminal() {
  return (
    <section aria-label="Terminal" className="flex h-[84px] border-b border-[#b5b5b5]">
      <div className="flex w-[9px] shrink-0 flex-col items-center bg-[#f0f0f0]">
        <button type="button" aria-label="Close terminal" className="h-[8px] text-[8px] leading-[8px]">×</button>
        <div className="flex w-[7px] flex-1 items-end justify-center bg-linear-to-b from-[#dce7f5] to-[#a9c0de]">
          <span className="rotate-180 text-[7px] leading-[7px] text-[#33445c] [writing-mode:vertical-rl]">Terminal</span>
        </div>
      </div>
      <div className="flex min-w-0 flex-1 flex-col">
        <div className="flex h-[69px] overflow-hidden border-t border-l border-[#9c9c9c] border-b border-b-[#333] bg-white">
          <table className="w-full table-fixed self-start border-collapse">
            <colgroup>
              <col className="w-[87px]" />
              <col className="w-[375px]" />
              <col />
            </colgroup>
            <thead>
              <tr className="h-[16px] bg-linear-to-b from-white to-[#eef1f6] text-left">
                <th scope="col" className="p-0 pl-[4px] font-normal">Time</th>
                <th scope="col" className="p-0 pl-[4px] font-normal">From</th>
                <th scope="col" className="p-0 pl-[5px] font-normal">Headline</th>
              </tr>
            </thead>
            <tbody className="font-bold">
              {mails.map(([time, head], i) => (
                <tr key={head} className={i % 2 ? "h-[13px] border-t border-[#cfcfcf] bg-white" : "h-[13px] border-t border-[#cfcfcf] bg-[#ebebeb]"}>
                  <td className="border-r border-[#d5d5d5] p-0 pl-[2px]">
                    <span className="flex items-center gap-[4px] leading-[12px]">
                      <svg width="9" height="8" viewBox="0 0 9 8" fill="none" aria-hidden="true"><rect x=".5" y=".5" width="8" height="7" rx="1" fill="#f4e08a" stroke="#a5851f" /><path d="M2 3l2.500 2L7 3M2 6l1.500-1.500M7 6L5.500 4.500" stroke="#a5851f" strokeWidth=".8" /></svg>
                      {time}
                    </span>
                  </td>
                  <td className="border-r border-[#d5d5d5] p-0 pl-[3px] leading-[12px]">FinFx Trading Oy</td>
                  <td className="p-0 pl-[3px] leading-[12px]">{head}</td>
                </tr>
              ))}
            </tbody>
          </table>
          <ScrollBar thumb="h-[33px]" />
        </div>
        <div role="tablist" className="flex h-[14px] items-start pl-[3px] text-[#777]">
          {["Trade", "Account History", "Alerts", "Mailbox", "Signals", "Experts", "Journal"].map((t) =>
            t === "Mailbox" ? (
              <button key={t} type="button" role="tab" aria-selected className="-mt-px h-[12px] border border-t-0 border-[#333] bg-white px-[5px] text-black">{t}</button>
            ) : (
              <span key={t} className="flex h-[12px] items-center">
                <button type="button" role="tab" aria-selected={false} className="px-[6px]">{t}</button>
                {t !== "Alerts" && <span className="h-[7px] w-px bg-[#888]" />}
              </span>
            ),
          )}
        </div>
      </div>
    </section>
  );
}

/* ---------- page ---------- */

export default function App() {
  return (
    <div className="flex min-h-screen flex-col overflow-hidden bg-[#f0f0f0] font-['Open_Sans','Noto_Sans',sans-serif] text-[7px] leading-[10px] text-[#1c1c1c]">
      <header className="flex h-[13px] items-start justify-between bg-linear-to-b from-[#0b1f36] to-[#12304f] pl-px">
        <h1 className="flex items-center gap-[3px] text-[8px] leading-[12px] text-white"><Logo />166415: MetaTrader 4 FinFX - Demo Account - EURUSD,H4</h1>
        <div className="mr-[2px] flex h-[11px] overflow-hidden rounded-b-[3px] border border-t-0 border-[#8fa0b3]">
          <button type="button" aria-label="Minimize" className="flex w-[17px] items-center justify-center border-r border-[#8fa0b3] bg-[#4b5d73]"><span className="mt-[2px] h-[3px] w-[7px] bg-white" /></button>
          <button type="button" aria-label="Restore" className="flex w-[17px] items-center justify-center border-r border-[#8fa0b3] bg-[#4b5d73]"><svg width="8" height="8" viewBox="0 0 8 8" fill="none" aria-hidden="true"><path d="M2.500 2V.8h4.700v4.400H6" stroke="#fff" /><rect x="1" y="2.500" width="4.500" height="4.500" stroke="#fff" strokeWidth="1.300" /></svg></button>
          <button type="button" aria-label="Close" className="flex w-[28px] items-center justify-center bg-linear-to-b from-[#d98176] to-[#a9281b]"><svg width="8" height="7" viewBox="0 0 8 7" aria-hidden="true"><path d="M1 .5l6 6M7 .5l-6 6" stroke="#fff" strokeWidth="1.800" /></svg></button>
        </div>
      </header>

      <nav aria-label="Menu" className="flex h-[14px] items-center gap-[11px] border-b border-[#d9d9d9] bg-[#f5f5f5] pl-[5px]">
        {["File", "View", "Insert", "Charts", "Tools", "Window", "Help"].map((m) => (
          <button key={m} type="button">{m}</button>
        ))}
      </nav>

      <Toolbars />

      <main className="relative mr-[2px] min-h-[540px] flex-1 bg-[#ababab]">
        <ChartWindow title="GBPUSD,H4" place="top-[2px] left-[578px]"><GbpUsd /></ChartWindow>
        <ChartWindow title="USDCHF,H4" place="top-[260px] left-[2px]"><UsdChf /></ChartWindow>
        <ChartWindow title="USDJPY,H4" place="top-[260px] left-[578px]"><UsdJpy /></ChartWindow>
        <ChartWindow title="EURUSD,H4" active place="top-[2px] left-[2px]"><EurUsd /></ChartWindow>
        <Navigator />
        <MarketWatch />
        <svg className="absolute top-[328px] left-[170px]" width="15" height="22" viewBox="0 0 15 22" aria-hidden="true">
          <path d="M1.500 1v15.500l3.800-3.500 2.700 6.500 3-1.200-2.700-6.300h5z" fill="#fff" stroke="#333" strokeWidth=".8" />
        </svg>
      </main>

      <div className="flex h-[16px] items-start justify-between border-t border-[#444] bg-[#f0f0f0] pr-[6px]">
        <div role="tablist" className="flex items-start pl-[3px] text-[#777]">
          <button type="button" role="tab" aria-selected className="-mt-px h-[13px] border border-t-0 border-[#333] bg-white pr-[8px] pl-[5px] text-black">EURUSD,H4</button>
          {["USDCHF,H4", "GBPUSD,H4", "USDJPY,H4"].map((t) => (
            <span key={t} className="flex h-[12px] items-center">
              <button type="button" role="tab" aria-selected={false} className="pr-[8px] pl-[6px]">{t}</button>
              <span className="h-[8px] w-px bg-[#888]" />
            </span>
          ))}
        </div>
        <div className="flex h-[12px] items-center gap-[8px]">
          <button type="button" aria-label="Previous tab"><svg width="3" height="5" viewBox="0 0 3 5" aria-hidden="true"><path d="M3 0v5L0 2.500z" fill="#777" /></svg></button>
          <button type="button" aria-label="Next tab"><svg width="3" height="5" viewBox="0 0 3 5" aria-hidden="true"><path d="M0 0v5l3-2.500z" fill="#777" /></svg></button>
        </div>
      </div>

      <Terminal />

      <footer className="flex h-[14px] items-center text-[#333]">
        <span className="flex-1 pl-[2px]">For Help, press F1</span>
        <span className="w-[77px] border-l border-[#a5a5a5] pl-[3px]">Default</span>
        <span className="h-[10px] w-[62px] border-l border-[#a5a5a5]" />
        <span className="h-[10px] w-[53px] border-l border-[#a5a5a5]" />
        <span className="h-[10px] w-[48px] border-l border-[#a5a5a5]" />
        <span className="h-[10px] w-[45px] border-l border-[#a5a5a5]" />
        <span className="h-[10px] w-[47px] border-l border-[#a5a5a5]" />
        <span className="h-[10px] w-[44px] border-l border-[#a5a5a5]" />
        <span className="flex w-[108px] items-center justify-between border-l border-[#a5a5a5] pr-[30px] pl-[3px]">
          <svg width="16" height="9" viewBox="0 0 16 9" shapeRendering="crispEdges" aria-hidden="true">
            <path d="M0 0h16v9H0z" fill="#e8e8d8" />
            <path d="M1.500 0v8M3.500 0v7M5.500 0v6M7.500 0v6M9.500 0v5M11.500 0v4M13.500 0v3M15.500 0v2" stroke="#56700f" />
            <path d="M.5 0v9M2.500 7v2M4.500 7v2M6.500 6v3M8.500 5v4M10.500 5v4M12.500 4v5M14.500 2v7" stroke="#8c1612" />
            <path d="M1.500 8v1M3.500 7v2M5.500 7v2M7.500 6v3M9.500 6v3M11.500 5v4M13.500 4v5M15.500 3v6" stroke="#3a1a10" />
          </svg>
          525/1 kb
        </span>
      </footer>
    </div>
  );
}
